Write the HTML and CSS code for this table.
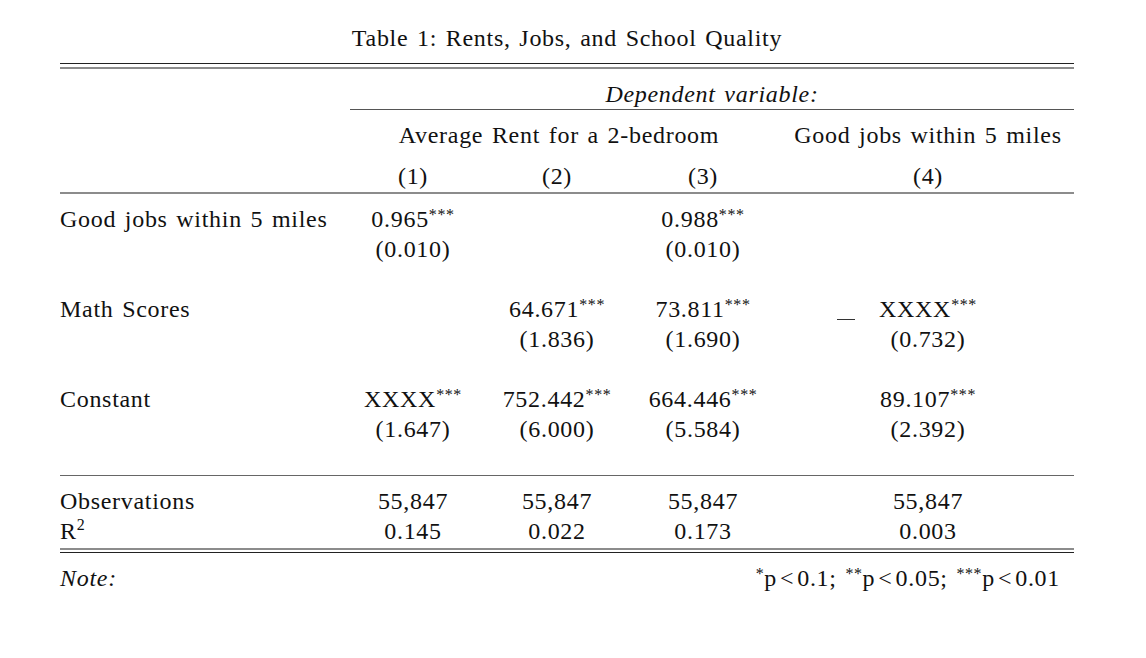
FILE: index.html
```html
<!DOCTYPE html>
<html lang="en">
<head>
<meta charset="utf-8">
<title>Table 1: Rents, Jobs, and School Quality</title>
<link rel="stylesheet" href="styles.css">
</head>
<body>
<div class="page">
  <div class="caption">Table 1: Rents, Jobs, and School Quality</div>
  <div class="rule-top"></div>

  <div class="row head-dep">
    <div></div>
    <div class="c span4"><em>Dependent variable:</em></div>
  </div>
  <div class="cline"></div>
  <div class="row head-names">
    <div></div>
    <div class="c span3">Average Rent for a 2-bedroom</div>
    <div class="c c4">Good jobs within 5 miles</div>
  </div>
  <div class="row head-nums">
    <div></div>
    <div class="c">(1)</div>
    <div class="c">(2)</div>
    <div class="c">(3)</div>
    <div class="c c4">(4)</div>
  </div>
  <div class="rule-mid"></div>

  <div class="body">
    <div class="row">
      <div class="label">Good jobs within 5 miles</div>
      <div class="c">0.965<span class="sig">***</span></div>
      <div class="c"></div>
      <div class="c">0.988<span class="sig">***</span></div>
      <div class="c c4"></div>
    </div>
    <div class="row">
      <div></div>
      <div class="c">(0.010)</div>
      <div class="c"></div>
      <div class="c">(0.010)</div>
      <div class="c c4"></div>
    </div>
    <div class="row"></div>

    <div class="row">
      <div class="label">Math Scores</div>
      <div class="c"></div>
      <div class="c">64.671<span class="sig">***</span></div>
      <div class="c">73.811<span class="sig">***</span></div>
      <div class="c c4"><span class="dash"></span>XXXX<span class="sig">***</span></div>
    </div>
    <div class="row">
      <div></div>
      <div class="c"></div>
      <div class="c">(1.836)</div>
      <div class="c">(1.690)</div>
      <div class="c c4">(0.732)</div>
    </div>
    <div class="row"></div>

    <div class="row">
      <div class="label">Constant</div>
      <div class="c">XXXX<span class="sig">***</span></div>
      <div class="c">752.442<span class="sig">***</span></div>
      <div class="c">664.446<span class="sig">***</span></div>
      <div class="c c4">89.107<span class="sig">***</span></div>
    </div>
    <div class="row">
      <div></div>
      <div class="c">(1.647)</div>
      <div class="c">(6.000)</div>
      <div class="c">(5.584)</div>
      <div class="c c4">(2.392)</div>
    </div>
    <div class="row"></div>
  </div>

  <div class="rule-thin"></div>

  <div class="stats">
    <div class="row">
      <div class="label">Observations</div>
      <div class="c">55,847</div>
      <div class="c">55,847</div>
      <div class="c">55,847</div>
      <div class="c c4">55,847</div>
    </div>
    <div class="row">
      <div class="label">R<span class="sup2">2</span></div>
      <div class="c">0.145</div>
      <div class="c">0.022</div>
      <div class="c">0.173</div>
      <div class="c c4">0.003</div>
    </div>
  </div>

  <div class="rule-bottom"></div>

  <div class="row note">
    <div class="label"><em>Note:</em></div>
    <div class="notes span4"><span class="sig">*</span>p<span class="lt">&lt;</span>0.1; <span class="sig">**</span>p<span class="lt">&lt;</span>0.05; <span class="sig">***</span>p<span class="lt">&lt;</span>0.01</div>
  </div>
</div>
</body>
</html>
```

FILE: styles.css
```css
html, body {
  margin: 0;
  padding: 0;
  background: #ffffff;
}

body {
  font-family: "Liberation Serif", "Times New Roman", serif;
  font-size: 24px;
  color: #111111;
  letter-spacing: 0.7px;
  word-spacing: 2px;
}

.page {
  margin-left: 60px;
  width: 1014px;
}

.caption {
  margin-top: 23px;
  height: 30px;
  line-height: 30px;
  text-align: center;
}

.rule-top {
  margin-top: 10px;
  height: 3px;
  border-top: 1px solid #222222;
  border-bottom: 2px solid #8c8c8c;
}

.row {
  display: grid;
  grid-template-columns: 290px 126px 162px 130px 306px;
  height: 30px;
  line-height: 30px;
  white-space: nowrap;
}

.row > div {
  box-sizing: border-box;
}

.c {
  text-align: center;
}

.c4 {
  padding-left: 14px;
}

.span3 {
  grid-column: span 3;
}

.span4 {
  grid-column: span 4;
}

.label {
  text-align: left;
}

em {
  font-style: italic;
}

.head-dep {
  margin-top: 10px;
}

.cline {
  margin-top: 0;
  margin-left: 290px;
  border-top: 1px solid #555555;
}

.head-names {
  margin-top: 10px;
}

.head-nums {
  margin-top: 11px;
}

.rule-mid {
  margin-top: 1px;
  border-top: 2px solid #8c8c8c;
}

.body {
  margin-top: 10px;
}

.rule-thin {
  margin-top: 1px;
  border-top: 1px solid #666666;
}

.stats {
  margin-top: 10px;
}

.rule-bottom {
  margin-top: 2px;
  height: 2px;
  border-top: 2px solid #8c8c8c;
  border-bottom: 1px solid #222222;
}

.note {
  margin-top: 10px;
}

.notes {
  text-align: right;
  padding-right: 14px;
}

.sig {
  font-size: 16px;
  line-height: 0;
  vertical-align: 7px;
  letter-spacing: 0.6px;
}

.lt {
  margin: 0 3px;
}

.sup2 {
  font-size: 16px;
  line-height: 0;
  vertical-align: 9px;
}

.dash {
  display: inline-block;
  width: 18px;
  height: 1px;
  background: #333333;
  vertical-align: -3px;
  margin-left: -42px;
  margin-right: 24px;
}
```
